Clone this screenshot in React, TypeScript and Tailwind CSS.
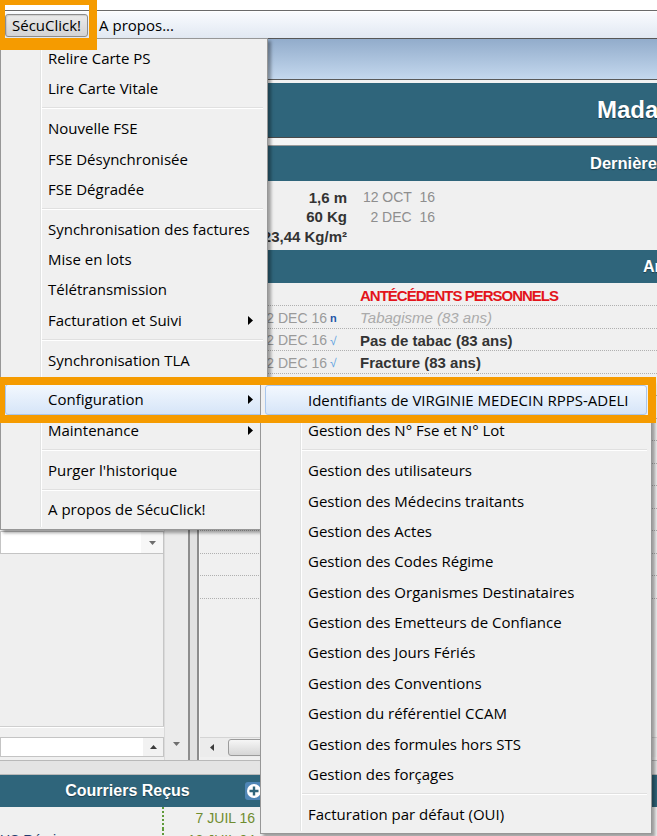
import React from 'react';

type Item = { label: string; sub?: boolean; active?: boolean };
type Entry = Item | null; // null = separator

const mainMenu: Entry[] = [
  { label: 'Relire Carte PS' },
  { label: 'Lire Carte Vitale' },
  null,
  { label: 'Nouvelle FSE' },
  { label: 'FSE Désynchronisée' },
  { label: 'FSE Dégradée' },
  null,
  { label: 'Synchronisation des factures' },
  { label: 'Mise en lots' },
  { label: 'Télétransmission' },
  { label: 'Facturation et Suivi', sub: true },
  null,
  { label: 'Synchronisation TLA' },
  null,
  { label: 'Configuration', sub: true, active: true },
  { label: 'Maintenance', sub: true },
  null,
  { label: "Purger l'historique" },
  null,
  { label: 'A propos de SécuClick!' },
];

const configMenu: Entry[] = [
  { label: 'Identifiants de VIRGINIE MEDECIN RPPS-ADELI', active: true },
  { label: 'Gestion des N° Fse et N° Lot' },
  null,
  { label: 'Gestion des utilisateurs' },
  { label: 'Gestion des Médecins traitants' },
  { label: 'Gestion des Actes' },
  { label: 'Gestion des Codes Régime' },
  { label: 'Gestion des Organismes Destinataires' },
  { label: 'Gestion des Emetteurs de Confiance' },
  { label: 'Gestion des Jours Fériés' },
  { label: 'Gestion des Conventions' },
  { label: 'Gestion du référentiel CCAM' },
  { label: 'Gestion des formules hors STS' },
  { label: 'Gestion des forçages' },
  null,
  { label: 'Facturation par défaut (OUI)' },
];

const antecedents = [
  { date: '2 DEC 16', mark: 'n', label: 'Tabagisme (83 ans)', old: true },
  { date: '2 DEC 16', mark: '√', label: 'Pas de tabac (83 ans)' },
  { date: '2 DEC 16', mark: '√', label: 'Fracture (83 ans)' },
];

const SubArrow = () => (
  <svg width="5" height="9" viewBox="0 0 5 9" className="mr-[9px] shrink-0">
    <path d="M0 0L5 4.5L0 9Z" fill="#000" />
  </svg>
);

const DownTri = () => (
  <svg width="7" height="4" viewBox="0 0 7 4">
    <path d="M0 0H7L3.5 4Z" fill="#6e6e6e" />
  </svg>
);

const UpTri = () => (
  <svg width="7" height="4" viewBox="0 0 7 4">
    <path d="M0 4H7L3.5 0Z" fill="#3c3c3c" />
  </svg>
);

const LeftTri = () => (
  <svg width="4" height="7" viewBox="0 0 4 7">
    <path d="M4 0V7L0 3.5Z" fill="#3c3c3c" />
  </svg>
);

function PopupMenu({ entries, className }: { entries: Entry[]; className: string }) {
  return (
    <div
      className={`absolute border border-[#979797] bg-[#f0f0f0] p-[4px] font-['Open_Sans',sans-serif] text-[15px] text-black shadow-[3px_3px_3px_rgba(0,0,0,0.35)] ${className}`}
    >
      {/* icon gutter */}
      <div className="absolute top-[2px] bottom-[2px] left-[39px] w-[2px] border-l border-[#e2e3e3] bg-white" />
      {entries.map((e, i) =>
        e === null ? (
          <div key={i} className="relative flex h-[9.4px] items-center pl-[37px]">
            <div className="h-[2px] flex-1 border-t border-[#e0e0e0] bg-white" />
          </div>
        ) : (
          <div
            key={i}
            className={`relative flex h-[30.4px] items-center rounded-[3px] border pl-[42px] ${
              e.active
                ? 'border-[#a9c7ec] bg-linear-to-b from-[#f3f8fe] to-[#d6e5f8]'
                : 'border-transparent'
            }`}
          >
            <span className="flex-1 whitespace-nowrap">{e.label}</span>
            {e.sub && <SubArrow />}
          </div>
        )
      )}
    </div>
  );
}

export default function App() {
  return (
    <div className="relative h-[836px] w-[657px] overflow-hidden bg-[#f0f0f0] font-['Liberation_Sans',Arial,sans-serif]">
      {/* window top edge */}
      <div className="h-[10px] bg-white" />
      <div className="h-px bg-[#6a6a6a]" />
      <div className="h-px bg-white" />

      {/* menu bar */}
      <div className="flex h-[26px] items-center bg-linear-to-b from-[#f9fbfe] to-[#e1e8f2] font-['Open_Sans',sans-serif] text-[15px] text-black">
        <div className="ml-[5px] flex h-[23px] items-center rounded-[3px] border border-[#8c8c8c] bg-linear-to-b from-[#ebebeb] to-[#d3d3d3] px-[6px] shadow-[inset_1px_1px_1px_rgba(0,0,0,0.12)]">
          SécuClick!
        </div>
        <div className="ml-[11px]">A propos...</div>
      </div>

      {/* body */}
      <div className="flex h-[722px]">
        {/* left pane */}
        <div className="flex w-[188px]">
          <div className="flex w-[164px] flex-col">
            <div className="h-[493px]" />
            <div className="flex h-[23px] border border-[#c4c4c4] bg-white">
              <div className="flex-1" />
              <div className="flex w-[22px] items-center justify-center bg-[#f7f7f7]">
                <DownTri />
              </div>
            </div>
            <div className="flex-1 border-r border-[#c6c6c6] bg-[#efefef]" />
            <div className="h-[2px] border-t border-[#cfcfcf] bg-white" />
            <div className="h-[9px]" />
            <div className="flex h-[20px] border border-[#c4c4c4] bg-white">
              <div className="flex-1" />
              <div className="flex w-[20px] items-center justify-center bg-[#f2f2f2]">
                <UpTri />
              </div>
            </div>
            <div className="h-[3px]" />
          </div>
          {/* vertical scrollbar */}
          <div className="flex w-[24px] flex-col justify-end border-l border-[#dadada] bg-[#ebebeb] pb-[9px]">
            <div className="flex h-[14px] items-center justify-center">
              <DownTri />
            </div>
          </div>
        </div>

        {/* splitter */}
        <div className="flex w-[12px]">
          <div className="w-[2px] bg-[#8d8d8d]" />
          <div className="flex-1 bg-[#e2e2e2]" />
          <div className="w-[2px] bg-[#8d8d8d]" />
          <div className="w-px bg-[#f7f7f7]" />
        </div>

        {/* patient pane */}
        <div className="flex min-w-0 flex-1 flex-col overflow-hidden">
          <div className="h-px bg-[#575757]" />
          <div className="h-[40px] bg-linear-to-b from-[#92accb] to-[#c4d8ee]" />
          <div className="h-px bg-[#5a5a5a]" />
          <div className="h-[3px] bg-[#f2f2f2]" />
          <div className="flex h-[55px] items-center overflow-hidden whitespace-nowrap border-b border-[#4a4a4a] bg-[#2f657b] pl-[397px] text-[24px] font-bold text-white [text-shadow:0_1px_1px_rgba(0,0,0,0.5)]">
            Madame
          </div>
          <div className="h-[8px] border-b border-[#9a9a9a] bg-[#f5f5f5]" />
          <div className="flex h-[35px] items-center overflow-hidden whitespace-nowrap bg-[#2f657b] pl-[390px] text-[16.5px] font-bold text-white [text-shadow:0_1px_1px_rgba(0,0,0,0.4)]">
            Dernières constantes
          </div>
          <div className="h-[69px] pt-[7px] text-[15px]">
            {[
              ['1,6 m', '12 OCT  16'],
              ['60 Kg', '2 DEC  16'],
              ['23,44 Kg/m²', ''],
            ].map(([v, d]) => (
              <div key={v} className="flex h-[19.5px] items-center">
                <span className="w-[147px] text-right font-bold text-[#333]">{v}</span>
                <span className="w-[88px] whitespace-pre text-right text-[14px] text-[#8e8e8e]">{d}</span>
              </div>
            ))}
          </div>
          <div className="flex h-[33px] items-center overflow-hidden whitespace-nowrap bg-[#2f657b] pl-[443px] text-[16px] font-bold text-white [text-shadow:0_1px_1px_rgba(0,0,0,0.4)]">
            Antécédents
          </div>
          <div className="flex h-[23px] items-center border-b border-dotted border-[#b0b0b0] pt-[4px] pl-[160px] text-[15px] font-bold tracking-[-1px] text-[#e3141b]">
            ANTÉCÉDENTS PERSONNELS
          </div>
          {Array.from({ length: 13 }).map((_, i) => {
            const a = antecedents[i];
            return (
              <div key={i} className="flex h-[22.5px] items-center border-b border-dotted border-[#b0b0b0] pt-[3px] text-[15px]">
                {a && (
                  <>
                    <span className="w-[127px] text-right text-[14px] text-[#9a9a9a]">{a.date}</span>
                    <span
                      className={`w-[33px] pl-[3px] ${
                        a.old ? 'text-[11px] font-bold text-[#2456a8]' : 'text-[12px] text-[#5aa0e0]'
                      }`}
                    >
                      {a.mark}
                    </span>
                    <span className={a.old ? 'italic text-[#ababab]' : 'font-bold text-[#333]'}>{a.label}</span>
                  </>
                )}
              </div>
            );
          })}
          <div className="flex-1" />
          <div className="flex h-[20px] items-center border-t border-[#d4d4d4] bg-[#ececec] pl-[3px]">
            <div className="flex w-[18px] items-center justify-center">
              <LeftTri />
            </div>
            <div className="ml-[7px] h-[17px] w-[220px] rounded-[3px] border border-[#9b9b9b] bg-linear-to-b from-[#f6f6f6] to-[#d6d6d6]" />
          </div>
          <div className="h-[3px]" />
        </div>
      </div>

      {/* bottom panels */}
      <div className="h-[15px] border-y border-[#b9b9b9] bg-[#e4e4e4]" />
      <div className="flex h-[32px]">
        <div className="flex w-[265px] items-center bg-[#2f657b]">
          <div className="w-[10px]" />
          <div className="flex-1 text-center text-[16px] font-bold text-white [text-shadow:0_1px_1px_rgba(0,0,0,0.4)]">
            Courriers Reçus
          </div>
          <div className="flex w-[20px] items-center">
            <svg width="18" height="18" viewBox="0 0 18 18">
              <rect x="0" y="0" width="18" height="18" rx="3" fill="#4f86b6" />
              <circle cx="9" cy="9" r="7" fill="#fff" />
              <path d="M9 4.5V13.5M4.5 9H13.5" stroke="#2f657b" strokeWidth="2.4" />
            </svg>
          </div>
        </div>
        <div className="w-[3px] bg-[#dcdcdc]" />
        <div className="flex-1 bg-[#2f657b]" />
      </div>
      <div className="flex">
        <div className="w-[265px] text-[14px]">
          {[
            ['', '7 JUIL 16'],
            ['US Rémi', '12 JUIL 04'],
          ].map(([n, d]) => (
            <div key={d} className="flex h-[22px] items-center">
              <div className="flex h-full w-[164px] items-center border-r-2 border-dotted border-[#5f9a3a] text-[#223a6e]">
                {n}
              </div>
              <div className="flex-1 pr-[10px] text-right text-[#6f8c2f]">{d}</div>
            </div>
          ))}
        </div>
      </div>

      {/* dropdown menus */}
      <PopupMenu entries={mainMenu} className="left-0 top-[38px] w-[268px]" />
      <PopupMenu entries={configMenu} className="left-[260px] top-[380px] w-[392px]" />

      {/* orange annotation frames */}
      <div className="absolute -left-[3px] -top-[3px] h-[53px] w-[100px] border-[8px] border-b-[12px] border-[#f59b00]" />
      <div className="absolute -left-[3px] top-[377px] h-[46px] w-[659px] border-[8px] border-[#f59b00]" />
    </div>
  );
}
